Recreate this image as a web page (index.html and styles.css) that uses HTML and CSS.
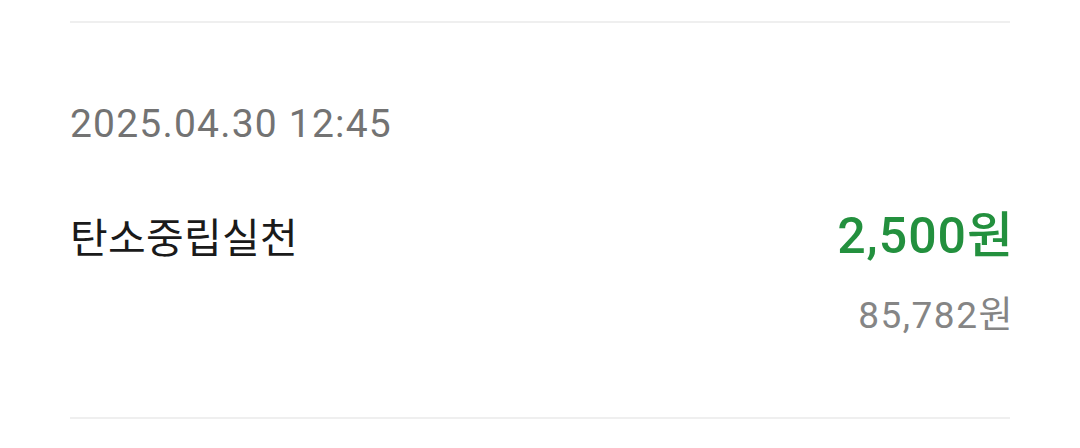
FILE: index.html
```html
<!DOCTYPE html>
<html lang="ko">
<head>
  <meta charset="UTF-8">
  <meta name="viewport" content="width=device-width, initial-scale=1.0">
  <title>포인트 내역</title>
  <link rel="stylesheet" href="styles.css">
</head>
<body>
  <div class="history">
    <div class="divider"></div>
    <div class="item">
      <div class="date">2025.04.30 12:45</div>
      <div class="row">
        <span class="title">탄소중립실천</span>
        <span class="amount">2,500원</span>
      </div>
      <div class="balance"><span>85,782원</span></div>
    </div>
    <div class="divider"></div>
  </div>
</body>
</html>
```

FILE: styles.css
```css
body {
  margin: 0;
  background: #fff;
  font-family: Roboto, "Noto Sans CJK KR", sans-serif;
}
.history {
  padding: 0 70px;
}
.divider {
  height: 2px;
  background: #efefef;
}
.history > .divider:first-child {
  margin-top: 21px;
}
.item {
  padding: 77px 0 79px;
}
.date {
  font-size: 39px;
  line-height: 48px;
  letter-spacing: 1.2px;
  color: #737373;
}
.row {
  display: flex;
  justify-content: space-between;
  align-items: baseline;
  margin-top: 57px;
  line-height: 60px;
}
.title {
  font-family: "Noto Sans CJK KR", sans-serif;
  font-size: 41px;
  letter-spacing: 0.3px;
  color: #1a1a1a;
}
.amount {
  font-size: 50px;
  font-weight: 500;
  letter-spacing: 1px;
  margin-right: -4px;
  color: #23903e;
}
.balance {
  margin-top: 28px;
  text-align: right;
  font-size: 37px;
  line-height: 44px;
  color: #858585;
}
.balance span {
  letter-spacing: 1.5px;
  margin-right: -4px;
}
```
